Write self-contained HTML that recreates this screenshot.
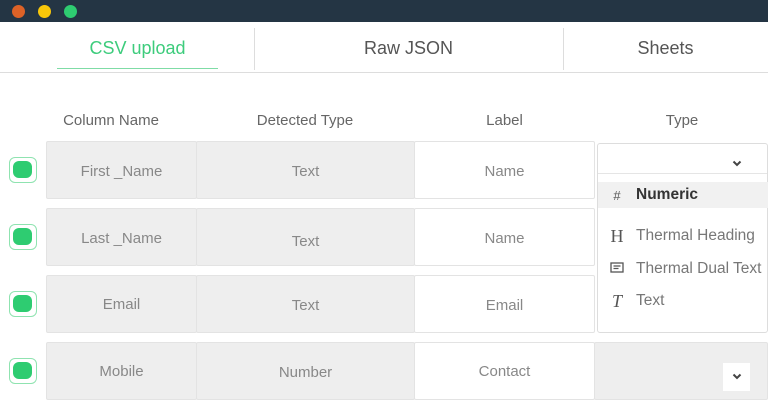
<!DOCTYPE html>
<html><head><style>
*{margin:0;padding:0;box-sizing:border-box}
body{width:768px;height:406px;overflow:hidden;background:#fff;font-family:"Liberation Sans",sans-serif;color:#777;position:relative}
.bar{position:absolute;left:0;top:0;width:768px;height:22px;background:#243544}
.dot{position:absolute;top:5px;width:13px;height:13px;border-radius:50%}
.tabs{position:absolute;top:22px;left:0;width:768px;height:51px;border-bottom:1px solid #ddd}
.tab{position:absolute;top:16px;font-size:18px;color:#555;text-align:center}
.div{position:absolute;top:6px;width:1px;height:42px;background:#ddd}
.h{position:absolute;top:112px;font-size:15px;color:#666;text-align:center}
.c{position:absolute;height:58px;display:flex;align-items:center;justify-content:center;font-size:15px;color:#888;border:1px solid #e3e3e3;border-radius:2px;padding-top:3px}
.g{background:#eee}
.w{background:#fff}
.cb{position:absolute;left:9px;width:28px;height:26px;border:1.5px solid #8fe3b0;border-radius:6px;background:#fff}
.cb i{position:absolute;left:3px;top:3px;width:19px;height:17px;border-radius:6px;background:#2ecc71}
.dd{position:absolute;left:597px;top:143px;width:171px;height:190px;border:1px solid #ddd;border-radius:3px;background:#fff}
.it{position:absolute;left:0;width:170px;height:26px;display:flex;align-items:center;font-size:15.5px;color:#777;white-space:nowrap}
.it b{display:inline-block;width:38px;text-align:center;color:#555;font-weight:normal}
</style></head><body>
<div class="bar"><div class="dot" style="left:12px;background:#dd6227"></div><div class="dot" style="left:38px;background:#f8c70a"></div><div class="dot" style="left:64px;background:#2ecc71"></div></div>
<div class="tabs">
<div class="tab" style="left:57px;width:161px;color:#3dcc7c">CSV upload</div>
<div style="position:absolute;left:57px;top:46px;width:161px;height:1px;background:#7fdca6"></div>
<div class="div" style="left:254px"></div>
<div class="tab" style="left:254px;width:309px">Raw JSON</div>
<div class="div" style="left:563px"></div>
<div class="tab" style="left:563px;width:205px">Sheets</div>
</div>
<div class="h" style="left:46px;width:130px">Column Name</div>
<div class="h" style="left:196px;width:218px">Detected Type</div>
<div class="h" style="left:415px;width:179px">Label</div>
<div class="h" style="left:596px;width:172px">Type</div>

<div class="cb" style="top:157px"><i></i></div>
<div class="c g" style="left:46px;top:141px;width:151px">First _Name</div>
<div class="c g" style="left:196px;top:141px;width:219px">Text</div>
<div class="c w" style="left:414px;top:141px;width:181px">Name</div>

<div class="cb" style="top:224px"><i></i></div>
<div class="c g" style="left:46px;top:208px;width:151px">Last _Name</div>
<div class="c g" style="left:196px;top:208px;width:219px;padding-top:8px">Text</div>
<div class="c w" style="left:414px;top:208px;width:181px">Name</div>

<div class="cb" style="top:291px"><i></i></div>
<div class="c g" style="left:46px;top:275px;width:151px;padding-top:1px">Email</div>
<div class="c g" style="left:196px;top:275px;width:219px">Text</div>
<div class="c w" style="left:414px;top:275px;width:181px">Email</div>

<div class="cb" style="top:358px"><i></i></div>
<div class="c g" style="left:46px;top:342px;width:151px;padding-top:0">Mobile</div>
<div class="c g" style="left:196px;top:342px;width:219px">Number</div>
<div class="c w" style="left:414px;top:342px;width:181px;padding-top:0">Contact</div>
<div class="c g" style="left:594px;top:342px;width:174px"></div>
<div style="position:absolute;left:723px;top:363px;width:27px;height:28px;background:#fff;text-align:center;line-height:28px;font-size:11px;color:#444">
<svg width="10" height="7" viewBox="0 0 10 7" style="margin-top:10px"><path d="M1.5 1.5L5 5 8.5 1.5" stroke="#444" stroke-width="2" fill="none"/></svg></div>

<div class="dd">
<svg width="10" height="7" viewBox="0 0 10 7" style="position:absolute;left:134px;top:16px"><path d="M1.5 1.5L5 5 8.5 1.5" stroke="#444" stroke-width="2" fill="none"/></svg>
<div style="position:absolute;left:0;top:29px;width:169px;height:1px;background:#e5e5e5"></div>
<div class="it" style="top:38px;background:#f1f1f1;color:#333;font-weight:bold"><b style="font-size:13px">#</b>Numeric</div>
<div class="it" style="top:79px"><b style="font-family:'Liberation Serif',serif;font-size:18px">H</b>Thermal Heading</div>
<div class="it" style="top:112px"><b><svg width="14" height="11" viewBox="0 0 14 11"><rect x="1" y="1" width="12" height="9" fill="none" stroke="#555" stroke-width="1.3"/><path d="M3.5 4h7M3.5 6.5h5" stroke="#555" stroke-width="1.2"/></svg></b>Thermal Dual Text</div>
<div class="it" style="top:144px"><b style="font-family:'Liberation Serif',serif;font-style:italic;font-size:18px">T</b>Text</div>
</div>
</body></html>
